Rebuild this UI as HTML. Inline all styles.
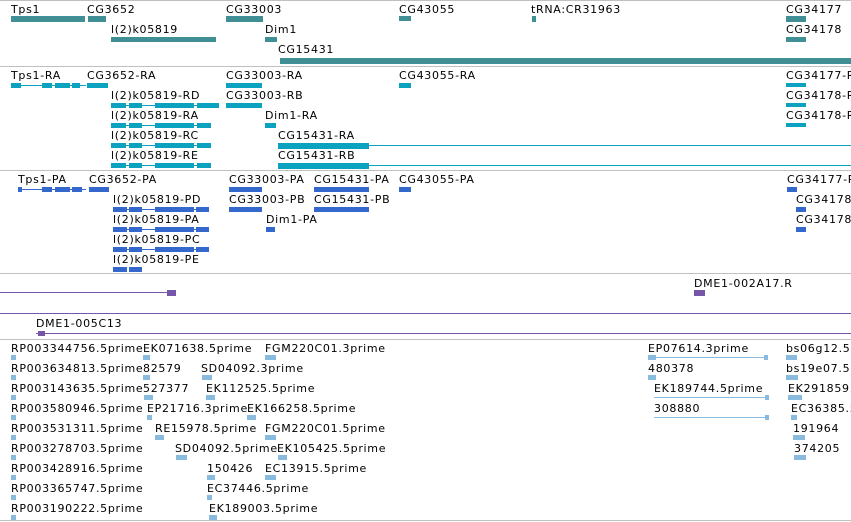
<!DOCTYPE html>
<html><head><meta charset="utf-8"><style>
body{margin:0;width:851px;height:522px;background:#fff;position:relative;overflow:hidden;font-family:"DejaVu Sans","Liberation Sans",sans-serif}
div{position:absolute}
.t{font-size:11px;line-height:13px;color:#000;white-space:nowrap;letter-spacing:0.7px;margin-top:1px}
.s{left:0;width:851px;height:1px;background:#c0c0c0}
.a{background:#3f8f95}
.b{background:#0ba2c0}
.c{background:#3468cc}
.p{background:#7556a8}
.l{background:#88bbdd}
</style></head><body>
<div class="s" style="top:0"></div>
<div class="s" style="top:66px"></div>
<div class="s" style="top:170px"></div>
<div class="s" style="top:273px"></div>
<div class="s" style="top:339px"></div>
<div class="s" style="top:520px"></div>

<!-- Track 1 -->
<div class="t" style="left:11px;top:2px">Tps1</div>
<div class="a" style="left:11px;top:16px;width:74px;height:6px"></div>
<div class="t" style="left:87px;top:2px">CG3652</div>
<div class="a" style="left:88px;top:16px;width:18px;height:6px"></div>
<div class="t" style="left:111px;top:22px">l(2)k05819</div>
<div class="a" style="left:111px;top:37px;width:105px;height:5px"></div>
<div class="t" style="left:226px;top:2px">CG33003</div>
<div class="a" style="left:226px;top:16px;width:37px;height:6px"></div>
<div class="t" style="left:265px;top:22px">Dim1</div>
<div class="a" style="left:265px;top:37px;width:12px;height:5px"></div>
<div class="t" style="left:278px;top:42px">CG15431</div>
<div class="a" style="left:280px;top:58px;width:571px;height:6px"></div>
<div class="t" style="left:399px;top:2px">CG43055</div>
<div class="a" style="left:399px;top:16px;width:12px;height:5px"></div>
<div class="t" style="left:531px;top:2px">tRNA:CR31963</div>
<div class="a" style="left:532px;top:16px;width:4px;height:6px"></div>
<div class="t" style="left:786px;top:2px">CG34177</div>
<div class="a" style="left:786px;top:16px;width:20px;height:6px"></div>
<div class="t" style="left:786px;top:22px">CG34178</div>
<div class="a" style="left:786px;top:37px;width:20px;height:5px"></div>

<!-- Track 2 -->
<div class="t" style="left:11px;top:68px">Tps1-RA</div>
<div class="b" style="left:11px;top:85px;width:75px;height:1px"></div>
<div class="b" style="left:11px;top:83px;width:10px;height:5px"></div>
<div class="b" style="left:42px;top:83px;width:10px;height:5px"></div>
<div class="b" style="left:55px;top:83px;width:15px;height:5px"></div>
<div class="b" style="left:72px;top:83px;width:8px;height:5px"></div>
<div class="t" style="left:87px;top:68px">CG3652-RA</div>
<div class="b" style="left:87px;top:83px;width:21px;height:5px"></div>
<div class="t" style="left:226px;top:68px">CG33003-RA</div>
<div class="b" style="left:226px;top:83px;width:36px;height:5px"></div>
<div class="t" style="left:399px;top:68px">CG43055-RA</div>
<div class="b" style="left:399px;top:83px;width:12px;height:5px"></div>
<div class="t" style="left:786px;top:68px">CG34177-RA</div>
<div class="b" style="left:786px;top:83px;width:20px;height:4px"></div>

<div class="t" style="left:111px;top:88px">l(2)k05819-RD</div>
<div class="b" style="left:111px;top:105px;width:108px;height:1px"></div>
<div class="b" style="left:111px;top:103px;width:15px;height:5px"></div>
<div class="b" style="left:129px;top:103px;width:13px;height:5px"></div>
<div class="b" style="left:155px;top:103px;width:39px;height:5px"></div>
<div class="b" style="left:197px;top:103px;width:22px;height:5px"></div>
<div class="t" style="left:226px;top:88px">CG33003-RB</div>
<div class="b" style="left:226px;top:103px;width:36px;height:5px"></div>
<div class="t" style="left:786px;top:88px">CG34178-RA</div>
<div class="b" style="left:786px;top:103px;width:20px;height:4px"></div>

<div class="t" style="left:111px;top:108px">l(2)k05819-RA</div>
<div class="b" style="left:111px;top:125px;width:100px;height:1px"></div>
<div class="b" style="left:111px;top:123px;width:15px;height:5px"></div>
<div class="b" style="left:129px;top:123px;width:13px;height:5px"></div>
<div class="b" style="left:155px;top:123px;width:39px;height:5px"></div>
<div class="b" style="left:197px;top:123px;width:14px;height:5px"></div>
<div class="t" style="left:265px;top:108px">Dim1-RA</div>
<div class="b" style="left:265px;top:123px;width:11px;height:5px"></div>
<div class="t" style="left:786px;top:108px">CG34178-RB</div>
<div class="b" style="left:786px;top:123px;width:20px;height:4px"></div>

<div class="t" style="left:111px;top:128px">l(2)k05819-RC</div>
<div class="b" style="left:111px;top:145px;width:100px;height:1px"></div>
<div class="b" style="left:111px;top:143px;width:15px;height:5px"></div>
<div class="b" style="left:129px;top:143px;width:13px;height:5px"></div>
<div class="b" style="left:155px;top:143px;width:39px;height:5px"></div>
<div class="b" style="left:197px;top:143px;width:14px;height:5px"></div>
<div class="t" style="left:278px;top:128px">CG15431-RA</div>
<div class="b" style="left:278px;top:143px;width:91px;height:6px"></div>
<div class="b" style="left:369px;top:145px;width:482px;height:1px"></div>

<div class="t" style="left:111px;top:148px">l(2)k05819-RE</div>
<div class="b" style="left:111px;top:165px;width:100px;height:1px"></div>
<div class="b" style="left:111px;top:163px;width:15px;height:5px"></div>
<div class="b" style="left:129px;top:163px;width:13px;height:5px"></div>
<div class="b" style="left:155px;top:163px;width:39px;height:5px"></div>
<div class="b" style="left:197px;top:163px;width:14px;height:5px"></div>
<div class="t" style="left:278px;top:148px">CG15431-RB</div>
<div class="b" style="left:278px;top:163px;width:91px;height:6px"></div>
<div class="b" style="left:369px;top:165px;width:482px;height:1px"></div>

<!-- Track 3 -->
<div class="t" style="left:18px;top:172px">Tps1-PA</div>
<div class="c" style="left:18px;top:189px;width:68px;height:1px"></div>
<div class="c" style="left:18px;top:187px;width:4px;height:5px"></div>
<div class="c" style="left:42px;top:187px;width:10px;height:5px"></div>
<div class="c" style="left:55px;top:187px;width:15px;height:5px"></div>
<div class="c" style="left:72px;top:187px;width:10px;height:5px"></div>
<div class="t" style="left:89px;top:172px">CG3652-PA</div>
<div class="c" style="left:89px;top:187px;width:20px;height:5px"></div>
<div class="t" style="left:229px;top:172px">CG33003-PA</div>
<div class="c" style="left:229px;top:187px;width:33px;height:5px"></div>
<div class="t" style="left:314px;top:172px">CG15431-PA</div>
<div class="c" style="left:314px;top:187px;width:55px;height:5px"></div>
<div class="t" style="left:399px;top:172px">CG43055-PA</div>
<div class="c" style="left:399px;top:187px;width:12px;height:5px"></div>
<div class="t" style="left:787px;top:172px">CG34177-PA</div>
<div class="c" style="left:787px;top:187px;width:10px;height:5px"></div>

<div class="t" style="left:113px;top:192px">l(2)k05819-PD</div>
<div class="c" style="left:113px;top:209px;width:96px;height:1px"></div>
<div class="c" style="left:113px;top:207px;width:14px;height:5px"></div>
<div class="c" style="left:129px;top:207px;width:13px;height:5px"></div>
<div class="c" style="left:155px;top:207px;width:39px;height:5px"></div>
<div class="c" style="left:196px;top:207px;width:13px;height:5px"></div>
<div class="t" style="left:229px;top:192px">CG33003-PB</div>
<div class="c" style="left:229px;top:207px;width:33px;height:5px"></div>
<div class="t" style="left:314px;top:192px">CG15431-PB</div>
<div class="c" style="left:314px;top:207px;width:55px;height:5px"></div>
<div class="t" style="left:796px;top:192px">CG34178-PA</div>
<div class="c" style="left:796px;top:207px;width:10px;height:5px"></div>

<div class="t" style="left:113px;top:212px">l(2)k05819-PA</div>
<div class="c" style="left:113px;top:229px;width:96px;height:1px"></div>
<div class="c" style="left:113px;top:227px;width:14px;height:5px"></div>
<div class="c" style="left:129px;top:227px;width:13px;height:5px"></div>
<div class="c" style="left:155px;top:227px;width:39px;height:5px"></div>
<div class="c" style="left:196px;top:227px;width:13px;height:5px"></div>
<div class="t" style="left:266px;top:212px">Dim1-PA</div>
<div class="c" style="left:266px;top:227px;width:9px;height:5px"></div>
<div class="t" style="left:796px;top:212px">CG34178-PB</div>
<div class="c" style="left:796px;top:227px;width:10px;height:5px"></div>

<div class="t" style="left:113px;top:232px">l(2)k05819-PC</div>
<div class="c" style="left:113px;top:249px;width:96px;height:1px"></div>
<div class="c" style="left:113px;top:247px;width:14px;height:5px"></div>
<div class="c" style="left:129px;top:247px;width:13px;height:5px"></div>
<div class="c" style="left:155px;top:247px;width:39px;height:5px"></div>
<div class="c" style="left:196px;top:247px;width:13px;height:5px"></div>

<div class="t" style="left:113px;top:252px">l(2)k05819-PE</div>
<div class="c" style="left:113px;top:267px;width:14px;height:5px"></div>
<div class="c" style="left:129px;top:267px;width:13px;height:5px"></div>

<!-- Track 4 -->
<div class="p" style="left:0;top:292px;width:172px;height:1px"></div>
<div class="p" style="left:167px;top:290px;width:9px;height:6px"></div>
<div class="t" style="left:694px;top:276px">DME1-002A17.R</div>
<div class="p" style="left:694px;top:290px;width:11px;height:6px"></div>
<div class="p" style="left:0;top:313px;width:851px;height:1px"></div>
<div class="t" style="left:36px;top:316px">DME1-005C13</div>
<div class="p" style="left:36px;top:333px;width:815px;height:1px"></div>
<div class="p" style="left:38px;top:331px;width:7px;height:5px"></div>

<!-- Track 5 -->
<div class="t" style="left:11px;top:341px">RP003344756.5prime</div>
<div class="t" style="left:11px;top:361px">RP003634813.5prime</div>
<div class="t" style="left:11px;top:381px">RP003143635.5prime</div>
<div class="t" style="left:11px;top:401px">RP003580946.5prime</div>
<div class="t" style="left:11px;top:421px">RP003531311.5prime</div>
<div class="t" style="left:11px;top:441px">RP003278703.5prime</div>
<div class="t" style="left:11px;top:461px">RP003428916.5prime</div>
<div class="t" style="left:11px;top:481px">RP003365747.5prime</div>
<div class="t" style="left:11px;top:501px">RP003190222.5prime</div>
<div class="l" style="left:11px;top:355px;width:5px;height:5px"></div>
<div class="l" style="left:11px;top:375px;width:5px;height:5px"></div>
<div class="l" style="left:11px;top:395px;width:5px;height:5px"></div>
<div class="l" style="left:11px;top:415px;width:5px;height:5px"></div>
<div class="l" style="left:11px;top:435px;width:5px;height:5px"></div>
<div class="l" style="left:11px;top:455px;width:5px;height:5px"></div>
<div class="l" style="left:11px;top:475px;width:5px;height:5px"></div>
<div class="l" style="left:11px;top:495px;width:5px;height:5px"></div>
<div class="l" style="left:11px;top:515px;width:5px;height:5px"></div>

<div class="t" style="left:143px;top:341px">EK071638.5prime</div>
<div class="l" style="left:143px;top:355px;width:7px;height:5px"></div>
<div class="t" style="left:143px;top:361px">82579</div>
<div class="l" style="left:143px;top:375px;width:7px;height:5px"></div>
<div class="t" style="left:143px;top:381px">527377</div>
<div class="l" style="left:144px;top:395px;width:9px;height:5px"></div>
<div class="t" style="left:147px;top:401px">EP21716.3prime</div>
<div class="l" style="left:147px;top:415px;width:5px;height:5px"></div>
<div class="t" style="left:155px;top:421px">RE15978.5prime</div>
<div class="l" style="left:155px;top:435px;width:9px;height:5px"></div>
<div class="t" style="left:175px;top:441px">SD04092.5prime</div>
<div class="l" style="left:176px;top:455px;width:11px;height:5px"></div>
<div class="t" style="left:207px;top:461px">150426</div>
<div class="l" style="left:207px;top:475px;width:8px;height:5px"></div>
<div class="t" style="left:207px;top:481px">EC37446.5prime</div>
<div class="l" style="left:207px;top:495px;width:5px;height:5px"></div>
<div class="t" style="left:209px;top:501px">EK189003.5prime</div>
<div class="l" style="left:209px;top:515px;width:8px;height:5px"></div>

<div class="t" style="left:265px;top:341px">FGM220C01.3prime</div>
<div class="l" style="left:265px;top:355px;width:11px;height:5px"></div>
<div class="t" style="left:201px;top:361px">SD04092.3prime</div>
<div class="l" style="left:202px;top:375px;width:10px;height:5px"></div>
<div class="t" style="left:206px;top:381px">EK112525.5prime</div>
<div class="l" style="left:206px;top:395px;width:9px;height:5px"></div>
<div class="t" style="left:247px;top:401px">EK166258.5prime</div>
<div class="l" style="left:247px;top:415px;width:9px;height:5px"></div>
<div class="t" style="left:265px;top:421px">FGM220C01.5prime</div>
<div class="l" style="left:265px;top:435px;width:11px;height:5px"></div>
<div class="t" style="left:277px;top:441px">EK105425.5prime</div>
<div class="l" style="left:278px;top:455px;width:9px;height:5px"></div>
<div class="t" style="left:265px;top:461px">EC13915.5prime</div>
<div class="l" style="left:265px;top:475px;width:11px;height:5px"></div>

<div class="t" style="left:648px;top:341px">EP07614.3prime</div>
<div class="l" style="left:648px;top:357px;width:120px;height:1px"></div>
<div class="l" style="left:648px;top:355px;width:8px;height:5px"></div>
<div class="l" style="left:764px;top:355px;width:4px;height:5px"></div>
<div class="t" style="left:648px;top:361px">480378</div>
<div class="l" style="left:648px;top:375px;width:8px;height:5px"></div>
<div class="t" style="left:654px;top:381px">EK189744.5prime</div>
<div class="l" style="left:654px;top:397px;width:115px;height:1px"></div>
<div class="l" style="left:765px;top:395px;width:4px;height:5px"></div>
<div class="t" style="left:654px;top:401px">308880</div>
<div class="l" style="left:654px;top:417px;width:115px;height:1px"></div>
<div class="l" style="left:765px;top:415px;width:4px;height:5px"></div>

<div class="t" style="left:786px;top:341px">bs06g12.5prime</div>
<div class="l" style="left:786px;top:355px;width:11px;height:5px"></div>
<div class="t" style="left:786px;top:361px">bs19e07.5prime</div>
<div class="l" style="left:786px;top:375px;width:12px;height:5px"></div>
<div class="t" style="left:788px;top:381px">EK291859.5prime</div>
<div class="l" style="left:788px;top:395px;width:14px;height:5px"></div>
<div class="t" style="left:791px;top:401px">EC36385.5prime</div>
<div class="l" style="left:791px;top:415px;width:6px;height:5px"></div>
<div class="t" style="left:793px;top:421px">191964</div>
<div class="l" style="left:793px;top:435px;width:12px;height:5px"></div>
<div class="t" style="left:794px;top:441px">374205</div>
<div class="l" style="left:794px;top:455px;width:12px;height:5px"></div>
</body></html>
